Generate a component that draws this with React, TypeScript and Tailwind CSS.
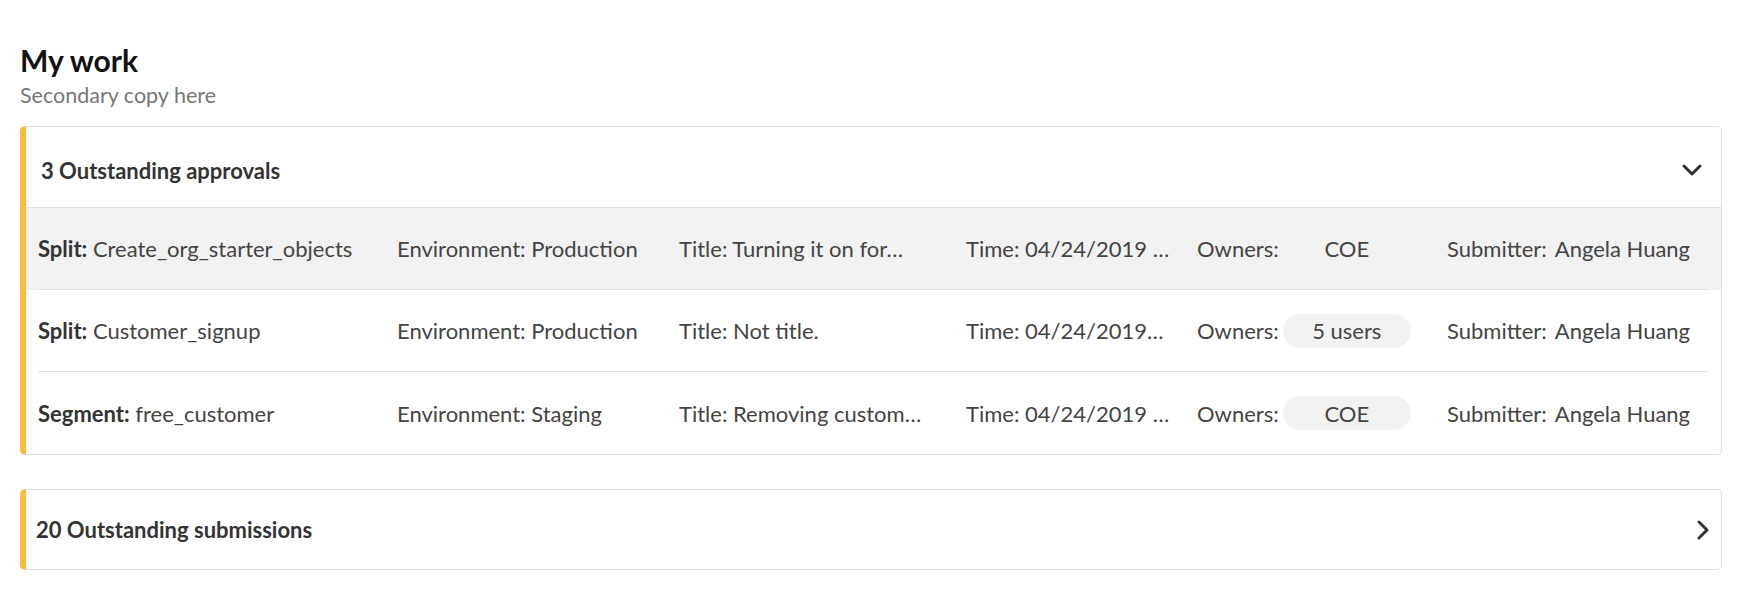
import { useState } from "react";

type Row = {
  kind: string;
  name: string;
  env: string;
  title: string;
  time: string;
  owners: string;
  submitter: string;
};

const rows: Row[] = [
  {
    kind: "Split:",
    name: "Create_org_starter_objects",
    env: "Environment: Production",
    title: "Title: Turning it on for…",
    time: "Time: 04/24/2019 …",
    owners: "COE",
    submitter: "Angela Huang",
  },
  {
    kind: "Split:",
    name: "Customer_signup",
    env: "Environment: Production",
    title: "Title: Not title.",
    time: "Time: 04/24/2019…",
    owners: "5 users",
    submitter: "Angela Huang",
  },
  {
    kind: "Segment:",
    name: "free_customer",
    env: "Environment: Staging",
    title: "Title: Removing custom…",
    time: "Time: 04/24/2019 …",
    owners: "COE",
    submitter: "Angela Huang",
  },
];

function ChevronDown() {
  return (
    <svg width="20" height="13" viewBox="0 0 20 13" fill="none">
      <polyline
        points="2,2 10,10 18,2"
        stroke="#333"
        strokeWidth="3"
        strokeLinecap="round"
        strokeLinejoin="round"
      />
    </svg>
  );
}

function ChevronRight() {
  return (
    <svg width="13" height="20" viewBox="0 0 13 20" fill="none">
      <polyline
        points="2,2 10,10 2,18"
        stroke="#333"
        strokeWidth="3"
        strokeLinecap="round"
        strokeLinejoin="round"
      />
    </svg>
  );
}

export default function App() {
  const [hovered] = useState(0);

  return (
    <div className="min-h-screen bg-white px-5 pt-[42px] font-['Lato','Open_Sans',sans-serif] text-[#444]">
      {/* heading */}
      <h1 className="text-[30px] font-bold leading-[36px] text-[#111]">My work</h1>
      <p className="mt-[4px] text-[21.5px] leading-[26px] text-[#777]">Secondary copy here</p>

      {/* approvals */}
      <div className="mt-[18px] overflow-hidden rounded-[5px] border border-[#ddd] border-l-[6px] border-l-[#f6bd41]">
        <div className="flex h-[81px] items-center justify-between border-b border-[#e2e2e2] pl-[15px] pr-[19px] pt-[6px]">
          <span className="text-[22px] font-bold text-[#333]">3 Outstanding approvals</span>
          <ChevronDown />
        </div>
        {rows.map((r, i) => (
          <div key={i} className={i === hovered ? "bg-[#f2f2f2] px-[12px]" : "px-[12px]"}>
            <div
              className={
                "grid h-[82px] grid-cols-[359px_282px_287px_231px_250px_1fr] items-center whitespace-nowrap text-[22px] " +
                (i < rows.length - 1 ? "border-b border-[#e2e2e2]" : "")
              }
            >
              <span>
                <b className="font-bold text-[#333]">{r.kind}</b> {r.name}
              </span>
              <span>{r.env}</span>
              <span>{r.title}</span>
              <span>{r.time}</span>
              <span className="flex items-center gap-1">
                Owners:
                <span className="flex h-[34px] w-[128px] items-center justify-center rounded-full bg-[#f2f2f2]">
                  {r.owners}
                </span>
              </span>
              <span className="flex items-center gap-[8px]">
                Submitter:
                <span>{r.submitter}</span>
              </span>
            </div>
          </div>
        ))}
      </div>

      {/* submissions */}
      <div className="mt-[34px] flex h-[81px] items-center justify-between rounded-[5px] border border-[#ddd] border-l-[6px] border-l-[#f6bd41] pl-[10px] pr-[11px]">
        <span className="text-[22px] font-bold text-[#333]">20 Outstanding submissions</span>
        <ChevronRight />
      </div>
    </div>
  );
}
